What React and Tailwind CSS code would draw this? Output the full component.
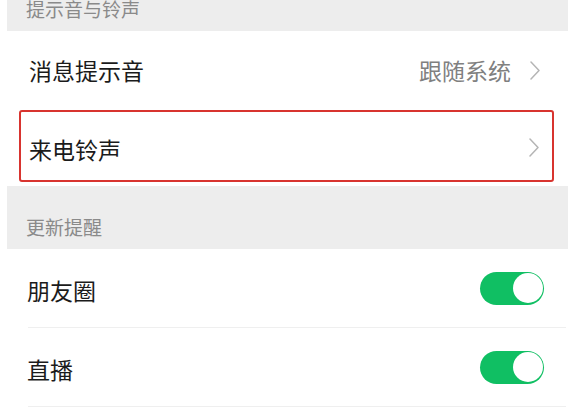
import React from 'react';

const font = { fontFamily: '"Noto Sans CJK SC", "Noto Sans", sans-serif' };

const Chevron = () => (
  <svg width="10" height="19" viewBox="0 0 10 19" fill="none">
    <polyline points="1,1 9,9.5 1,18" stroke="#b5b5b5" strokeWidth="1.5" strokeLinecap="round" strokeLinejoin="round" />
  </svg>
);

const Toggle = () => (
  <div className="w-[64px] h-[33px] rounded-full bg-[#10bf63] flex items-center justify-end pr-[1.5px]">
    <div className="w-[30px] h-[30px] rounded-full bg-white" />
  </div>
);

const SectionHeader = ({ title, className }) => (
  <div className={`mx-[7px] bg-[#ededed] flex items-end pl-[19px] pb-[13px] ${className}`}>
    <span className="text-[19px] leading-[19px] text-[#8a8a8a]">{title}</span>
  </div>
);

const SwitchRow = ({ label }) => (
  <div className="pl-[28px] pr-[9px]">
    <div className="h-[79px] flex items-center justify-between border-b border-[#efefef] pr-[22px]">
      <span className="text-[23px] leading-none text-[#1b1b1b] -ml-[1px] pt-[4px]">{label}</span>
      <Toggle />
    </div>
  </div>
);

export default function App() {
  return (
    <div className="w-full h-[420px] bg-white overflow-hidden" style={font}>
      <SectionHeader title="提示音与铃声" className="h-[31px]" />

      <div className="h-[78px] flex items-center justify-between pl-[29px] pr-[35px]">
        <span className="text-[23px] leading-none text-[#1b1b1b]">消息提示音</span>
        <div className="flex items-center gap-[19px]">
          <span className="text-[23px] leading-none text-[#808080]">跟随系统</span>
          <Chevron />
        </div>
      </div>

      <div className="ml-[19px] mr-[21px] mt-[1px] h-[72px] border-2 border-[#d8342f] rounded-[3px] flex items-center justify-between pl-[8px] pr-[13px] pt-[6px]">
        <span className="text-[23px] leading-none text-[#1b1b1b]">来电铃声</span>
        <div className="-mt-[3px]">
          <Chevron />
        </div>
      </div>

      <SectionHeader title="更新提醒" className="mt-[4px] h-[63px]" />

      <SwitchRow label="朋友圈" />
      <SwitchRow label="直播" />
    </div>
  );
}
